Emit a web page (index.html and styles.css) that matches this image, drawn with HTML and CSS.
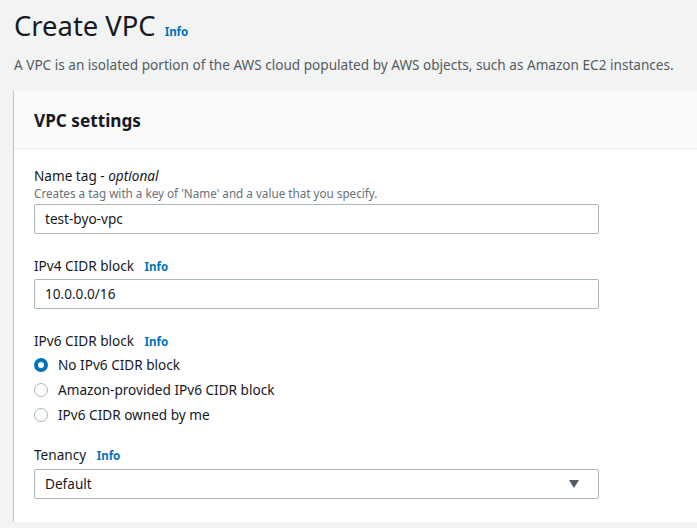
FILE: index.html
```html
<!DOCTYPE html>
<html>
<head>
<meta charset="utf-8">
<link rel="stylesheet" href="styles.css">
</head>
<body>
<div class="page">
  <div class="title-row">
    <h1 class="title">Create VPC</h1>
    <span class="info info-title">Info</span>
  </div>
  <p class="desc">A VPC is an isolated portion of the AWS cloud populated by AWS objects, such as Amazon EC2 instances.</p>
  <div class="card">
    <div class="card-header">VPC settings</div>
    <div class="card-body">
      <div class="field">
        <div class="label">Name tag - <i>optional</i></div>
        <div class="hint">Creates a tag with a key of 'Name' and a value that you specify.</div>
        <div class="input input-name">test-byo-vpc</div>
      </div>
      <div class="field field-cidr">
        <div class="label">IPv4 CIDR block <span class="info">Info</span></div>
        <div class="input input-cidr">10.0.0.0/16</div>
      </div>
      <div class="field field-ipv6">
        <div class="label">IPv6 CIDR block <span class="info">Info</span></div>
        <div class="radios">
          <div class="radio-row"><span class="radio checked"></span>No IPv6 CIDR block</div>
          <div class="radio-row"><span class="radio"></span>Amazon-provided IPv6 CIDR block</div>
          <div class="radio-row"><span class="radio"></span>IPv6 CIDR owned by me</div>
        </div>
      </div>
      <div class="field field-tenancy">
        <div class="label">Tenancy <span class="info">Info</span></div>
        <div class="input select">Default<span class="caret"></span></div>
      </div>
    </div>
  </div>
</div>
</body>
</html>
```

FILE: styles.css
```css
html, body {
  margin: 0;
  padding: 0;
  background: #f2f3f3;
  overflow: hidden;
  font-family: "Noto Sans", "Open Sans", sans-serif;
  color: #16191f;
}
.page {
  padding: 8px 0 0 14px;
  width: 720px;
}
.title-row {
  display: flex;
  align-items: baseline;
  gap: 9px;
  height: 36px;
}
.title {
  margin: 0;
  font-size: 27.4px;
  line-height: 36px;
  font-weight: 400;
}
.info {
  color: #0073bb;
  font-size: 11.5px;
  font-weight: 700;
}
.desc {
  margin: 11px 0 0 0;
  font-size: 13.6px;
  line-height: 20px;
  color: #545b64;
}
.card {
  margin-top: 15px;
  width: 700px;
  background: #fff;
  box-shadow: 0 1px 1px 0 rgba(0,28,36,.3), 1px 1px 1px 0 rgba(0,28,36,.15), -1px 1px 1px 0 rgba(0,28,36,.15);
}
.card-header {
  background: #fafafa;
  border-bottom: 1px solid #eaeded;
  height: 56px;
  padding-top: 2px;
  box-sizing: content-box;
  display: flex;
  align-items: center;
  padding-left: 20px;
  font-size: 17.2px;
  font-weight: 700;
}
.card-body {
  padding: 16px 20px 23px 20px;
  display: flex;
  flex-direction: column;
  gap: 20px;
}
.field {
  display: flex;
  flex-direction: column;
}
.field-cidr { margin-top: 1px; }
.field-ipv6 { margin-top: 1px; }
.field-tenancy { margin-top: -3px; }
.label {
  font-size: 13.6px;
  line-height: 22px;
}
.label .info {
  margin-left: 7px;
}
.hint {
  margin-top: -1px;
  font-size: 11.7px;
  line-height: 14px;
  color: #687078;
}
.input {
  margin-top: 5px;
  width: 565px;
  height: 30px;
  box-sizing: border-box;
  border: 1px solid #aab7b8;
  border-radius: 2px;
  padding: 0 10px;
  font-size: 13.6px;
  line-height: 28px;
  display: flex;
  align-items: center;
}
.input-name { margin-top: 4px; }
.input-cidr { margin-top: 1px; }
.select {
  justify-content: space-between;
  margin-top: 2px;
}
.caret {
  width: 0;
  height: 0;
  border-left: 5px solid transparent;
  border-right: 5px solid transparent;
  border-top: 8px solid #545b64;
  margin-right: 9px;
}
.radios {
  display: flex;
  flex-direction: column;
  margin-top: -1px;
}
.radio-row {
  display: flex;
  align-items: center;
  height: 25px;
  font-size: 13.6px;
}
.radio {
  width: 14px;
  height: 14px;
  box-sizing: border-box;
  border-radius: 50%;
  border: 1px solid #aab7b8;
  margin-right: 10px;
  background: #fff;
}
.radio.checked {
  border: 4px solid #0073bb;
}
```
